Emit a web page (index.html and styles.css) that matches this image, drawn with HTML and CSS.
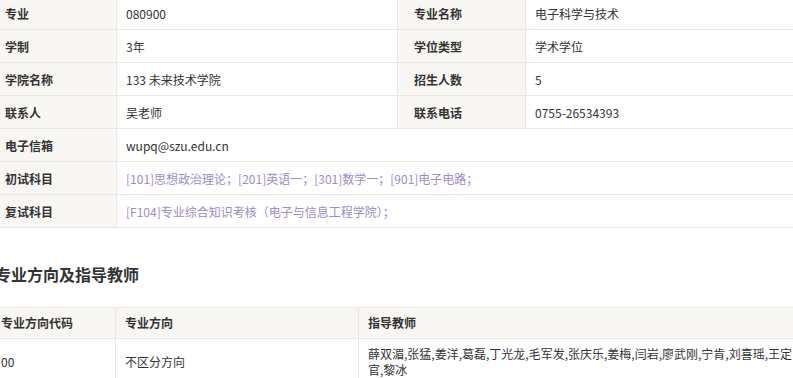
FILE: index.html
```html
<!DOCTYPE html>
<html lang="zh">
<head>
<meta charset="utf-8">
<link rel="stylesheet" href="styles.css">
</head>
<body>
<div class="page">
  <table class="info">
    <colgroup>
      <col class="c-l1"><col class="c-v1"><col class="c-l2"><col class="c-v2">
    </colgroup>
    <tr><td class="lbl">专业</td><td>080900</td><td class="lbl lbl2">专业名称</td><td>电子科学与技术</td></tr>
    <tr><td class="lbl">学制</td><td>3年</td><td class="lbl lbl2">学位类型</td><td>学术学位</td></tr>
    <tr><td class="lbl">学院名称</td><td>133 未来技术学院</td><td class="lbl lbl2">招生人数</td><td>5</td></tr>
    <tr><td class="lbl">联系人</td><td>吴老师</td><td class="lbl lbl2">联系电话</td><td>0755-26534393</td></tr>
    <tr><td class="lbl">电子信箱</td><td colspan="3">wupq@szu.edu.cn</td></tr>
    <tr><td class="lbl">初试科目</td><td colspan="3" class="subj">[101]思想政治理论；[201]英语一；[301]数学一；[901]电子电路；</td></tr>
    <tr><td class="lbl">复试科目</td><td colspan="3" class="subj">[F104]专业综合知识考核（电子与信息工程学院）；</td></tr>
  </table>

  <h2 class="title">专业方向及指导教师</h2>

  <table class="dir">
    <colgroup>
      <col class="d1"><col class="d2"><col class="d3">
    </colgroup>
    <tr class="head"><td>专业方向代码</td><td>专业方向</td><td>指导教师</td></tr>
    <tr><td>00</td><td>不区分方向</td><td>薛双湄,张猛,姜洋,葛磊,丁光龙,毛军发,张庆乐,姜梅,闫岩,廖武刚,宁肯,刘喜瑶,王定官,黎冰</td></tr>
  </table>
</div>
</body>
</html>
```

FILE: styles.css
```css
html, body {
  margin: 0;
  padding: 0;
  background: #fff;
  overflow: hidden;
}
body {
  font-family: "Noto Sans CJK SC", "Microsoft YaHei", sans-serif;
  font-size: 12px;
  color: #333;
}
.page {
  margin: -4px 0 0 0;
}
.info {
  border-collapse: collapse;
  table-layout: fixed;
  width: 840px;
  margin-left: -12px;
}
.c-l1 { width: 128px; }
.c-v1 { width: 281px; }
.c-l2 { width: 128px; }
.c-v2 { width: 303px; }
.info td {
  border: 1px solid #ebe7e0;
  height: 32px;
  padding: 0 9px;
  vertical-align: middle;
  white-space: nowrap;
}
.info td.lbl {
  background: #f9f7f3;
  font-weight: bold;
  padding-left: 16px;
}
.info td.subj {
  color: #a08cc8;
}
.title {
  font-size: 16px;
  font-weight: bold;
  color: #333;
  margin: 34px 0 0 -5px;
  line-height: 24px;
  height: 24px;
}
.dir {
  border-collapse: collapse;
  table-layout: fixed;
  width: 815px;
  margin: 21px 0 0 -9px;
}
.d1 { width: 124px; }
.d2 { width: 243px; }
.d3 { width: 448px; }
.dir td {
  border: 1px solid #ebe7e0;
  padding: 7px 9px;
  line-height: 16px;
  vertical-align: middle;
}
.dir tr.head td {
  background: #f9f7f3;
  font-weight: bold;
  height: 15px;
}
```
